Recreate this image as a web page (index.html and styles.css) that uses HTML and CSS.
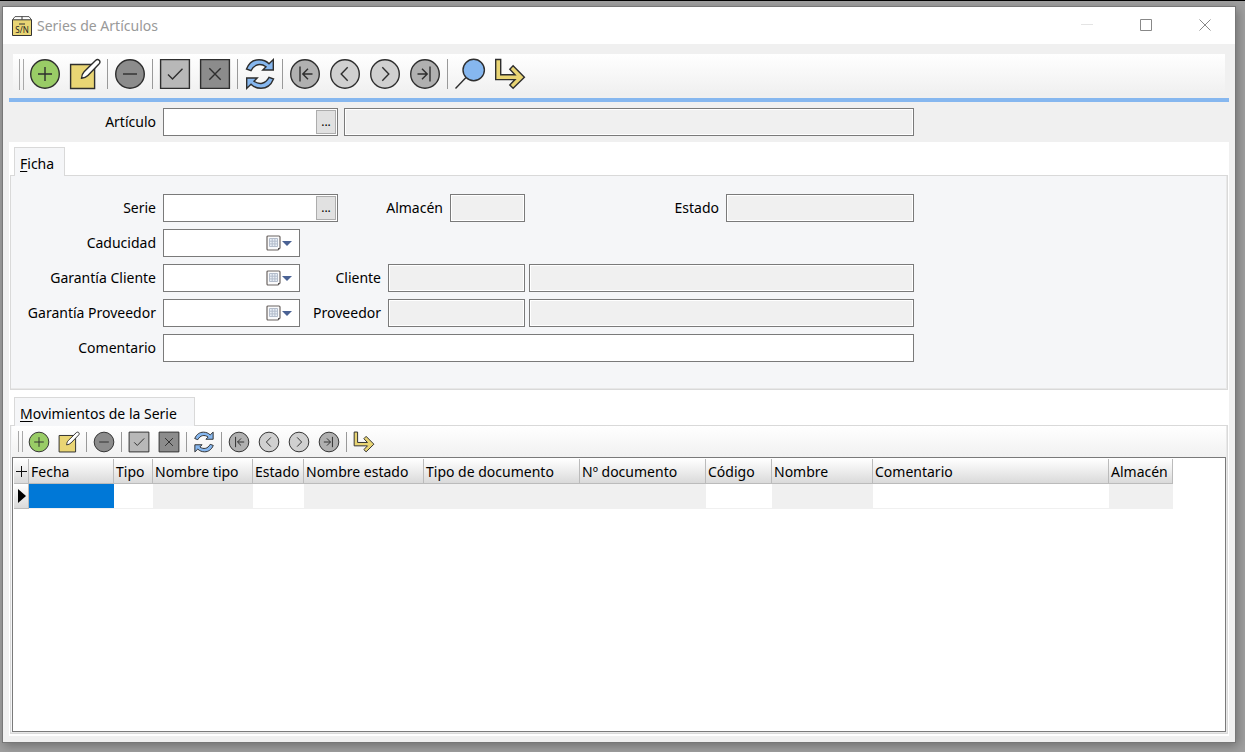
FILE: index.html
```html
<!DOCTYPE html>
<html lang="es">
<head>
<meta charset="utf-8">
<title>Series de Artículos</title>
<link rel="stylesheet" href="styles.css">
</head>
<body>
<svg class="sprite" aria-hidden="true">
  <symbol id="i-add" viewBox="0 0 32 32"><circle cx="16" cy="16" r="14.3" fill="#99cc66"/><path d="M16 9v14M9 16h14"/></symbol>
  <symbol id="i-edit" viewBox="0 0 32 32"><path d="M1.600 6.500h24v24h-24z" fill="#e9d574"/><path d="M12.500 20.200c.2-2.800 1-4.900 2.600-6.500L26.500 2.500c1.300-1.200 2.800-1.100 3.700-.2.900.9.900 2.400-.2 3.600L18.900 17.400c-1.600 1.600-3.600 2.500-6.400 2.800z" fill="#fff"/></symbol>
  <symbol id="i-remove" viewBox="0 0 32 32"><circle cx="16" cy="16" r="14.3" fill="#8c8c8c"/><path d="M9 16h14"/></symbol>
  <symbol id="i-ok" viewBox="0 0 32 32"><path d="M1.600 1.600h28.800v28.800H1.600z" fill="#b8b8b8"/><path d="M9 16.500l4.500 4.500L23.500 10.800"/></symbol>
  <symbol id="i-cancel" viewBox="0 0 32 32"><path d="M1.600 1.600h28.800v28.800H1.600z" fill="#8c8c8c"/><path d="M10.300 10.300l11.400 11.400M21.700 10.300L10.300 21.700"/></symbol>
  <symbol id="i-refresh" viewBox="0 0 32 32"><g id="refresh-half"><path d="M2.500 11C5 4.800 9.800 1.700 15 1.700c4 0 7.400 1.300 10 4L29.300 1.600V12H18.800L22 8.800C16.800 5 10.500 6 7 12.600z" fill="#86b7ef"/></g><use href="#refresh-half" transform="rotate(180 16 16)"/></symbol>
  <symbol id="i-first" viewBox="0 0 32 32"><circle cx="16" cy="16" r="14.300" fill="#b0b0b0"/><path d="M11 8.500v15M23.500 16H14M19 10.800L13.800 16l5.200 5.200"/></symbol>
  <symbol id="i-prev" viewBox="0 0 32 32"><circle cx="16" cy="16" r="14.300" fill="#d0d0d0"/><path d="M18.700 9.300L12.200 16l6.500 6.700"/></symbol>
  <symbol id="i-next" viewBox="0 0 32 32"><circle cx="16" cy="16" r="14.300" fill="#d0d0d0"/><path d="M13.300 9.300l6.500 6.700-6.500 6.700"/></symbol>
  <symbol id="i-last" viewBox="0 0 32 32"><circle cx="16" cy="16" r="14.300" fill="#b0b0b0"/><path d="M21 8.500v15M8.500 16H18M13 10.800l5.200 5.200-5.200 5.200"/></symbol>
  <symbol id="i-find" viewBox="0 0 32 32"><path d="M12 19.500L1.500 30.500"/><circle cx="19.700" cy="12" r="10.700" fill="#86b7ef"/></symbol>
  <symbol id="i-exit" viewBox="0 0 32 32"><path d="M1.700 1.500h5v15.200H21l-5.200-5.500 3.300-3.400 11.300 11.400L19.100 30.300l-3.300-3.200 5.200-5.500H1.700z" fill="#e9d574"/></symbol>
  <symbol id="i-calendar" viewBox="0 0 15 16"><path d="M2 1h11a1 1 0 0 1 1 1v11l-2 2H2a1 1 0 0 1-1-1V2a1 1 0 0 1 1-1z" fill="#fafafb" stroke="#6b6462" stroke-width="1.200"/><path d="M3.500 3.500h8v8h-8zM6.200 3.500v8M8.900 3.500v8M3.500 6.200h8M3.500 8.900h8" fill="#e8eef5" stroke="#b3bccb" stroke-width="1"/><path d="M14 13l-2 2v-2z" fill="#555" stroke="none"/></symbol>
</svg>

<main class="window">
  <header class="titlebar">
    <svg class="app-icon" viewBox="0 0 20 20" aria-hidden="true">
      <path d="M.5 3.800L3 .6h14l2.500 3.200" fill="#fff" stroke="#555"/>
      <path d="M.5 3.800h19v15.700H.5z" fill="#e9d574" stroke="#333"/>
      <path d="M10 .6v3M7 8h6" stroke="#333" fill="none"/>
      <text x="10" y="17" text-anchor="middle" class="app-icon-text">S/N</text>
    </svg>
    <h1 class="title">Series de Artículos</h1>
    <button class="win-btn" disabled aria-label="Minimizar"><svg viewBox="0 0 13 13"><path d="M0 5.500h12" stroke="#e4e4e4"/></svg></button>
    <button class="win-btn" aria-label="Maximizar"><svg viewBox="0 0 13 13"><path d="M.5 .5h11v11H.5z"/></svg></button>
    <button class="win-btn" aria-label="Cerrar"><svg viewBox="0 0 13 13"><path d="M.5 .5l11 11M11.500 .5L.5 11.500"/></svg></button>
  </header>

  <div class="client">
    <div class="toolbar" role="toolbar" aria-label="Serie">
      <span class="grip"></span>
      <button aria-label="Añadir"><svg><use href="#i-add"/></svg></button>
      <button aria-label="Editar"><svg><use href="#i-edit"/></svg></button>
      <span class="sep"></span>
      <button aria-label="Eliminar"><svg><use href="#i-remove"/></svg></button>
      <span class="sep"></span>
      <button aria-label="Aceptar"><svg><use href="#i-ok"/></svg></button>
      <button aria-label="Cancelar"><svg><use href="#i-cancel"/></svg></button>
      <span class="sep"></span>
      <button aria-label="Actualizar"><svg><use href="#i-refresh"/></svg></button>
      <span class="sep"></span>
      <button aria-label="Primero"><svg><use href="#i-first"/></svg></button>
      <button aria-label="Anterior"><svg><use href="#i-prev"/></svg></button>
      <button aria-label="Siguiente"><svg><use href="#i-next"/></svg></button>
      <button aria-label="Último"><svg><use href="#i-last"/></svg></button>
      <span class="sep"></span>
      <button aria-label="Buscar"><svg><use href="#i-find"/></svg></button>
      <button aria-label="Salir"><svg><use href="#i-exit"/></svg></button>
    </div>

    <div class="article">
      <div class="row">
        <label class="lead" for="articulo">Artículo</label>
        <div class="field picker"><input id="articulo" type="text"><button class="dots" aria-label="Buscar artículo">...</button></div>
        <input class="field readonly grow desc" type="text" readonly aria-label="Descripción del artículo">
      </div>
    </div>

    <div class="pages">
      <section class="page">
        <div class="tabs" role="tablist"><button class="tab" role="tab" aria-selected="true"><u>F</u>icha</button></div>
        <div class="panel form">
          <div class="row">
            <label class="lead" for="serie">Serie</label>
            <div class="field picker"><input id="serie" type="text"><button class="dots" aria-label="Buscar serie">...</button></div>
            <label class="grow" for="almacen">Almacén</label>
            <input id="almacen" class="field readonly short" type="text" readonly>
            <label class="state-label" for="estado">Estado</label>
            <input id="estado" class="field readonly state" type="text" readonly>
          </div>
          <div class="row">
            <label class="lead" for="caducidad">Caducidad</label>
            <div class="field date"><input id="caducidad" type="text"><button aria-label="Abrir calendario"><svg><use href="#i-calendar"/></svg><i class="caret"></i></button></div>
          </div>
          <div class="row">
            <label class="lead" for="gcliente">Garantía Cliente</label>
            <div class="field date"><input id="gcliente" type="text"><button aria-label="Abrir calendario"><svg><use href="#i-calendar"/></svg><i class="caret"></i></button></div>
            <label class="party" for="cliente">Cliente</label>
            <input id="cliente" class="field readonly code" type="text" readonly>
            <input class="field readonly grow name" type="text" readonly aria-label="Nombre del cliente">
          </div>
          <div class="row">
            <label class="lead" for="gproveedor">Garantía Proveedor</label>
            <div class="field date"><input id="gproveedor" type="text"><button aria-label="Abrir calendario"><svg><use href="#i-calendar"/></svg><i class="caret"></i></button></div>
            <label class="party" for="proveedor">Proveedor</label>
            <input id="proveedor" class="field readonly code" type="text" readonly>
            <input class="field readonly grow name" type="text" readonly aria-label="Nombre del proveedor">
          </div>
          <div class="row">
            <label class="lead" for="comentario">Comentario</label>
            <input id="comentario" class="field grow" type="text">
          </div>
        </div>
      </section>

      <section class="page movements">
        <div class="tabs" role="tablist"><button class="tab" role="tab" aria-selected="true"><u>M</u>ovimientos de la Serie</button></div>
        <div class="panel detail">
          <div class="toolbar small" role="toolbar" aria-label="Movimientos">
            <span class="grip"></span>
            <button aria-label="Añadir"><svg><use href="#i-add"/></svg></button>
            <button aria-label="Editar"><svg><use href="#i-edit"/></svg></button>
            <span class="sep"></span>
            <button aria-label="Eliminar"><svg><use href="#i-remove"/></svg></button>
            <span class="sep"></span>
            <button aria-label="Aceptar"><svg><use href="#i-ok"/></svg></button>
            <button aria-label="Cancelar"><svg><use href="#i-cancel"/></svg></button>
            <span class="sep"></span>
            <button aria-label="Actualizar"><svg><use href="#i-refresh"/></svg></button>
            <span class="sep"></span>
            <button aria-label="Primero"><svg><use href="#i-first"/></svg></button>
            <button aria-label="Anterior"><svg><use href="#i-prev"/></svg></button>
            <button aria-label="Siguiente"><svg><use href="#i-next"/></svg></button>
            <button aria-label="Último"><svg><use href="#i-last"/></svg></button>
            <span class="sep"></span>
            <button aria-label="Salir"><svg><use href="#i-exit"/></svg></button>
          </div>
          <div class="grid-box">
            <table class="grid">
              <colgroup><col class="c-mark"><col class="c-fecha"><col class="c-tipo"><col class="c-ntipo"><col class="c-estado"><col class="c-nestado"><col class="c-tdoc"><col class="c-ndoc"><col class="c-codigo"><col class="c-nombre"><col class="c-coment"><col class="c-almacen"></colgroup>
              <thead>
                <tr><th class="mark"><svg class="plus" viewBox="0 0 11 11" role="img" aria-label="Columnas"><path d="M5.500 0v11M0 5.500h11"/></svg></th><th>Fecha</th><th>Tipo</th><th>Nombre tipo</th><th>Estado</th><th>Nombre estado</th><th>Tipo de documento</th><th>Nº documento</th><th>Código</th><th>Nombre</th><th>Comentario</th><th>Almacén</th></tr>
              </thead>
              <tbody>
                <tr><td class="mark"><i class="pointer"></i></td><td class="selected"></td><td></td><td class="off"></td><td></td><td class="off"></td><td class="off"></td><td class="off"></td><td></td><td class="off"></td><td></td><td class="off"></td></tr>
              </tbody>
            </table>
          </div>
        </div>
      </section>
    </div>
  </div>
</main>
</body>
</html>
```

FILE: styles.css
```css
* { box-sizing: border-box; }

body {
  margin: 0;
  min-height: 100vh;
  display: flex;
  padding: 5px 9px 9px 2px;
  border-top: 1px solid #000;
  background: #a0a0a0;
  color: #000;
  font: 14px/20px "Noto Sans", "Open Sans", sans-serif;
}

button, input { font: inherit; color: inherit; margin: 0; }
button { padding: 0; border: 0; background: none; }
.sprite { display: none; }

.window {
  flex: 1;
  display: flex;
  flex-direction: column;
  min-width: 0;
  border: 1px solid #777;
  background: #f0f0f0;
  box-shadow: 2px 3px 10px rgba(0, 0, 0, 0.3);
}

/* Title bar */
.titlebar {
  display: flex;
  align-items: center;
  height: 37px;
  padding-left: 9px;
  background: #fff;
}
.app-icon { width: 20px; height: 20px; margin-right: 5px; }
.app-icon-text { font: 8px "Noto Sans", sans-serif; fill: #222; }
.title { flex: 1; margin: 0; font-size: 14px; font-weight: 400; color: #999; }
.win-btn { width: 59px; height: 37px; display: grid; place-items: center; }
.win-btn svg { width: 13px; height: 13px; fill: none; stroke: #888; }

/* Client area */
.client {
  flex: 1;
  display: flex;
  flex-direction: column;
  padding: 10px 6px 6px;
}

/* Toolbars */
.toolbar {
  display: flex;
  align-items: center;
  height: 40px;
  margin: 0 4px 4px;
  background: linear-gradient(#fff, #f0f0f0);
}
.toolbar button { width: 40px; height: 40px; display: grid; place-items: center; }
.toolbar svg { width: 32px; height: 32px; fill: none; stroke: #2e2e2e; stroke-width: 1.4; }
.grip {
  width: 5px;
  height: 31px;
  margin: 0 1px 0 6px;
  border: solid #a8a8a8;
  border-width: 0 1px;
}
.sep { width: 5px; height: 30px; display: flex; justify-content: center; }
.sep::before { content: ""; width: 1px; background: #999; }

.toolbar.small { height: 31px; margin: 0; background: linear-gradient(#fff, #f1f1f1); }
.small button { width: 30px; height: 30px; }
.small svg { width: 22px; height: 22px; }
.small .grip { height: 21px; }
.small .sep { height: 20px; }

/* Form rows */
.article { padding: 6px 2px; border-top: 4px solid #86b7ef; }
.row { display: flex; align-items: center; max-width: 903px; height: 28px; }
.row label { padding-right: 7px; text-align: right; white-space: nowrap; }
.row .lead { width: 152px; }
.row .grow { flex: 1; min-width: 0; }
.row .party { width: 88px; }
.row .state-label { width: 201px; }

.field {
  width: 175px;
  height: 28px;
  border: 1px solid #7a7a7a;
  border-radius: 0;
  background: #fff;
  padding: 1px 4px;
  outline: 0;
}
.field.readonly { background: #f0f0f0; box-shadow: inset 0 0 0 1px #fff; }
.field.short { width: 75px; }
.field.state { width: 188px; }
.field.code { width: 137px; }
.field.desc { margin-left: 6px; }
.field.name { margin-left: 4px; }

.picker, .date { display: flex; padding: 1px; }
.field input { flex: 1; min-width: 0; border: 0; padding: 0 3px; background: none; outline: 0; }
.dots { width: 20px; border: 1px solid #adadad; background: #e1e1e1; font-size: 12px; }
.date { width: 137px; }
.date button { display: flex; align-items: center; width: 32px; }
.date svg { width: 15px; height: 16px; }
.caret { border: solid transparent; border-width: 5px 5px 0; border-top-color: #4a6294; margin-left: 1px; }

/* Tabbed pages */
.pages {
  flex: 1;
  display: flex;
  flex-direction: column;
  gap: 7px;
  padding: 5px 1px 2px;
  background: #fff;
}
.movements { flex: 1; display: flex; flex-direction: column; }
.tabs { display: flex; height: 28px; padding-left: 4px; }
.tab {
  height: 29px;
  padding: 4px 10px 0 5px;
  border: 1px solid #d9d9d9;
  border-bottom: 0;
  background: #f5f6f8;
  z-index: 1;
}
.movements .tab { padding-right: 17px; }
.tab u { text-underline-offset: 2px; }
.panel { border: 1px solid #d9d9d9; background: #f5f6f8; box-shadow: inset -1px -1px 0 #e8e8e8; }
.form { display: flex; flex-direction: column; gap: 7px; padding: 18px 0 27px; }
.detail { flex: 1; display: flex; flex-direction: column; padding: 0 1px 1px; }

/* Data grid */
.grid-box { flex: 1; padding: 1px; border: 1px solid #7a7a7a; background: #fff; overflow: hidden; }
.grid { width: 1159px; table-layout: fixed; border-collapse: separate; border-spacing: 0; }
.grid th, .grid td { height: 25px; padding: 0; white-space: nowrap; }
.grid th {
  padding: 1px 0 0 2px;
  border: solid #bbb;
  border-width: 0 1px 1px 0;
  background: linear-gradient(#fff, #dadada);
  font-weight: 400;
  text-align: left;
}
.grid td { border-bottom: 1px solid #f0f0f0; }
.grid .mark { padding: 0; text-align: center; }
.grid td.mark { border-right: 1px solid #bbb; border-bottom-color: #bbb; background: linear-gradient(#fff, #dadada); }
.grid td.selected { background: #0078d7; }
.grid td.off { background: #f0f0f0; }
.plus { display: block; width: 11px; height: 11px; margin: 0 auto; fill: none; stroke: #111; }
.pointer { display: block; width: 0; margin-left: 4px; border: solid transparent; border-width: 7px 0 7px 8px; border-left-color: #000; }
.c-mark { width: 15px; }
.c-fecha { width: 85px; }
.c-tipo { width: 39px; }
.c-ntipo { width: 100px; }
.c-estado { width: 51px; }
.c-nestado { width: 120px; }
.c-tdoc { width: 156px; }
.c-ndoc { width: 126px; }
.c-codigo { width: 66px; }
.c-nombre { width: 101px; }
.c-coment { width: 236px; }
.c-almacen { width: 64px; }
```
